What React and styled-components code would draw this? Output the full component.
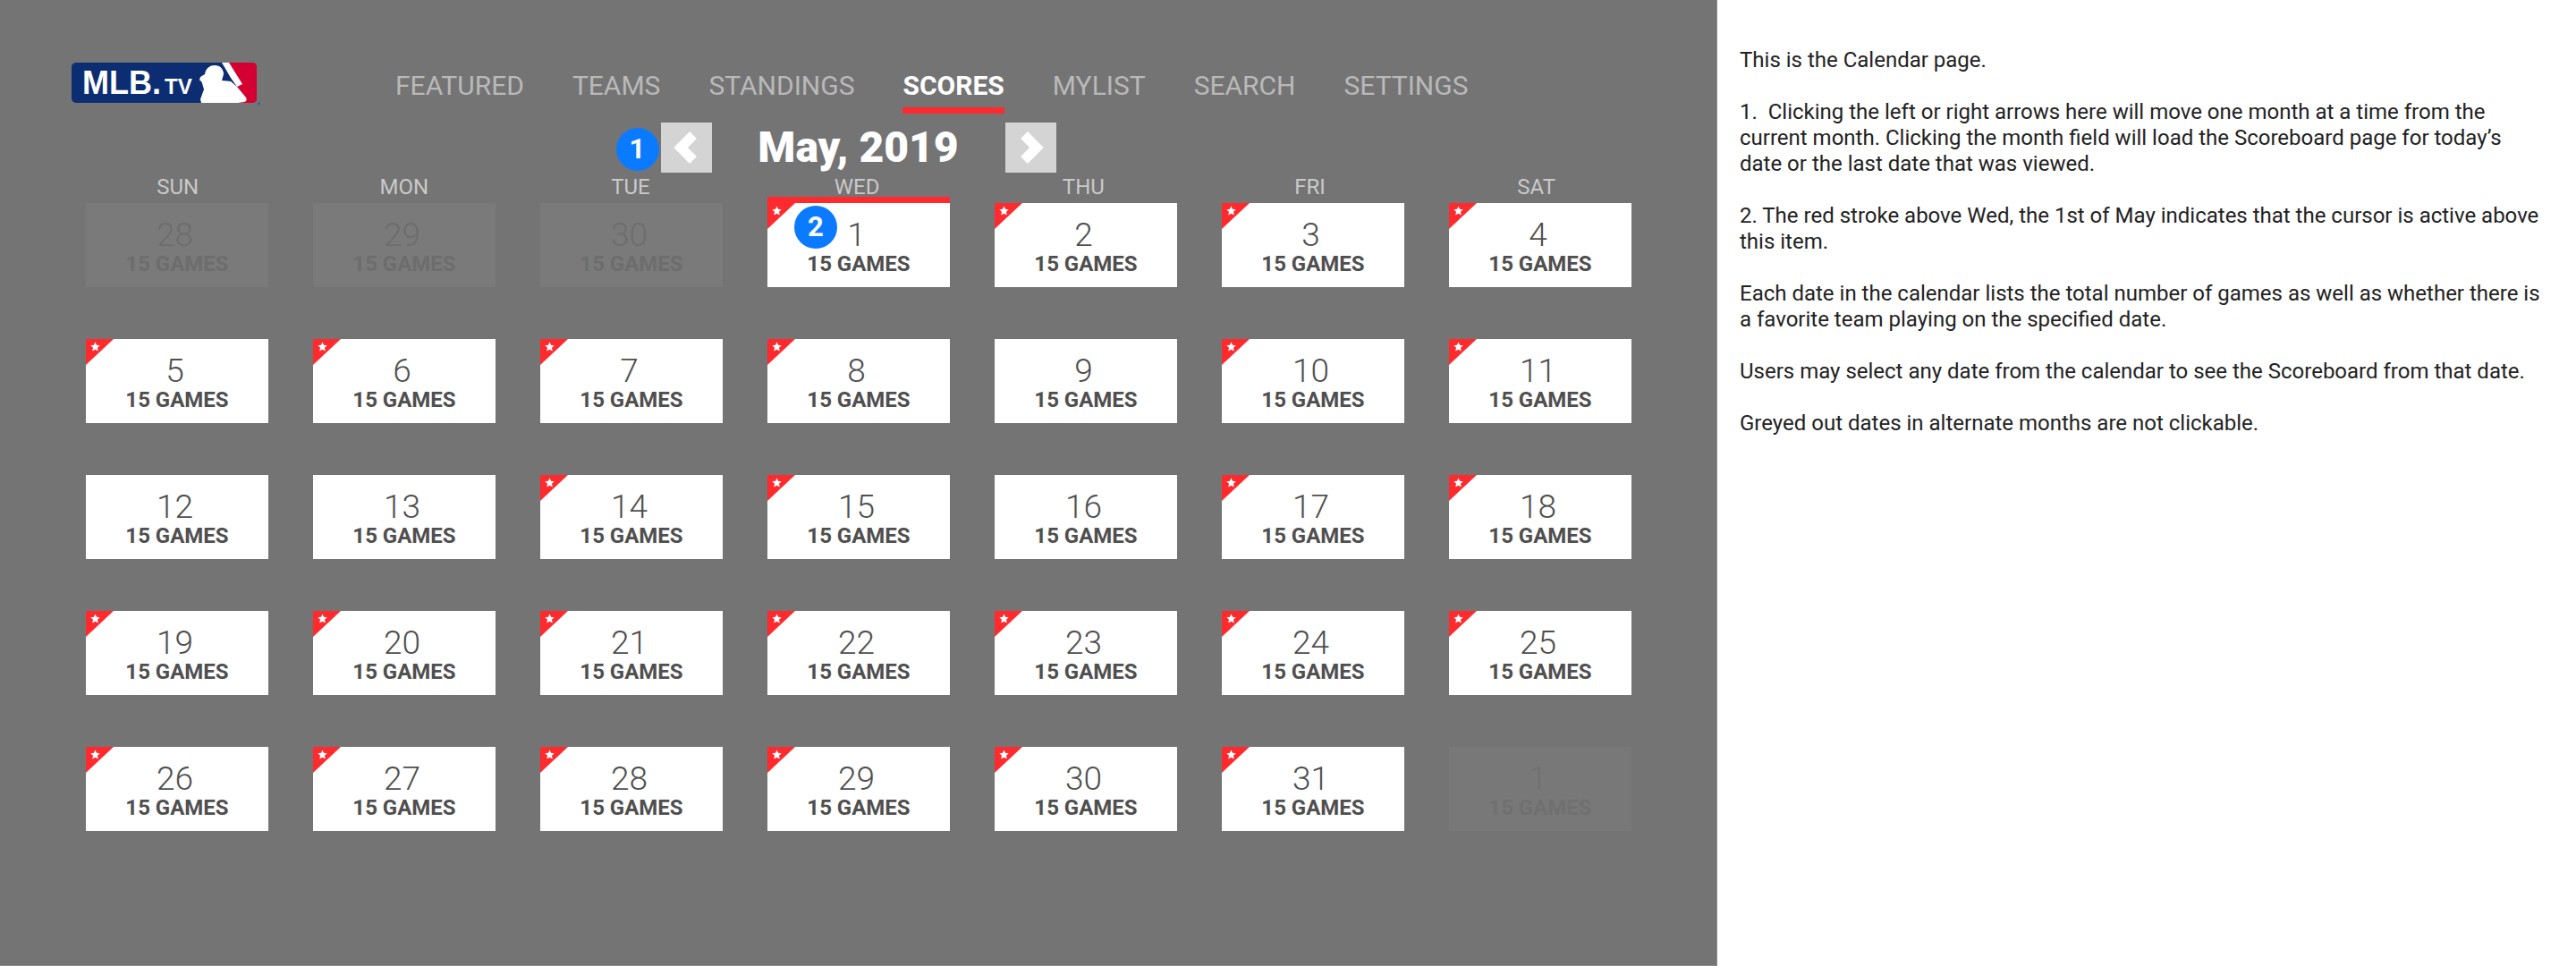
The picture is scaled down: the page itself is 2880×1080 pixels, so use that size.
import React from 'react';
import styled, { createGlobalStyle } from 'styled-components';

const NAV = ['FEATURED', 'TEAMS', 'STANDINGS', 'SCORES', 'MYLIST', 'SEARCH', 'SETTINGS'];
const WEEKDAYS = ['SUN', 'MON', 'TUE', 'WED', 'THU', 'FRI', 'SAT'];
const NO_FAVORITE = [9, 12, 13, 16];

const days = [
  { day: 28, muted: true },
  { day: 29, muted: true },
  { day: 30, muted: true },
  ...Array.from({ length: 31 }, (_, i) => ({ day: i + 1, favorite: !NO_FAVORITE.includes(i + 1) })),
  { day: 1, muted: true, faded: true },
];

const Logo = () => (
  <LogoSvg viewBox="0 0 212 48" width="212" height="48">
    <rect width="207" height="45" rx="5" fill="#0c2d72" />
    <path d="M176 0h26a5 5 0 0 1 5 5v35a5 5 0 0 1-5 5h-15l-1-8 4-3-14-20z" fill="#d50032" />
    <path d="M168 0h8l15 24-6 3-7-10z" fill="#fff" />
    <path d="M144 16l5-3c1-7 6-10 11-10 6 0 10 4 10 10l-2 7 10 1 7 6 10 12c1 2 1 4-2 5l-7 1v0h-41l-1-4 4-11-2-7c-1-2-1-3-3-3z" fill="#fff" />
    <LogoMark x="12" y="35" fontSize="36">
      MLB.
      <tspan dx="4" fontSize="24">TV</tspan>
    </LogoMark>
    <circle cx="209.5" cy="46" r="1.3" fill="#2f5597" />
  </LogoSvg>
);

const Star = () => (
  <StarSvg viewBox="0 0 24 24" width="11" height="11">
    <path d="M12 1l3.4 7.3 7.9 1-5.8 5.5 1.5 7.9L12 18.9l-7 3.8 1.5-7.9L.7 9.3l7.9-1z" fill="#fff" />
  </StarSvg>
);

const Chevron = ({ dir }) => (
  <svg viewBox="0 0 57 56" width="57" height="56">
    <polyline
      points={dir === 'left' ? '36,14 22,28 36,42' : '21,14 35,28 21,42'}
      fill="none"
      stroke="#fff"
      strokeWidth="11"
      strokeLinejoin="miter"
    />
  </svg>
);

export default function App() {
  return (
    <Page>
      <GlobalStyle />
      <Screen>
        <Header>
          <Logo />
          <Nav>
            {NAV.map((item) => (
              <NavItem key={item} $active={item === 'SCORES'}>{item}</NavItem>
            ))}
          </Nav>
        </Header>
        <MonthRow>
          <ArrowButton>
            <Badge $left={-50} $top={6}>1</Badge>
            <Chevron dir="left" />
          </ArrowButton>
          <MonthTitle>May, 2019</MonthTitle>
          <ArrowButton>
            <Chevron dir="right" />
          </ArrowButton>
        </MonthRow>
        <WeekRow>
          {WEEKDAYS.map((d) => (
            <WeekDay key={d}>{d}</WeekDay>
          ))}
        </WeekRow>
        <CalendarGrid>
          {days.map((d, i) => (
            <DayCard key={i} $muted={d.muted} $faded={d.faded} $active={i === 3}>
              {d.favorite && (
                <Corner>
                  <Star />
                </Corner>
              )}
              {i === 3 && <Badge $left={30} $top={3}>2</Badge>}
              <DayNumber>{d.day}</DayNumber>
              <GameCount>15 GAMES</GameCount>
            </DayCard>
          ))}
        </CalendarGrid>
      </Screen>
      <Notes>
        <p>This is the Calendar page.</p>
        <p>1.&nbsp; Clicking the left or right arrows here will move one month at a time from the current month. Clicking the month field will load the Scoreboard page for today’s date or the last date that was viewed.</p>
        <p>2. The red stroke above Wed, the 1st of May indicates that the cursor is active above this item.</p>
        <p>Each date in the calendar lists the total number of games as well as whether there is a favorite team playing on the specified date.</p>
        <p>Users may select any date from the calendar to see the Scoreboard from that date.</p>
        <p>Greyed out dates in alternate months are not clickable.</p>
      </Notes>
    </Page>
  );
}

const GlobalStyle = createGlobalStyle`
  html, body {
    margin: 0;
    padding: 0;
    background: #fff;
  }
  body {
    font-family: 'Roboto', 'Liberation Sans', sans-serif;
  }
`;

const Page = styled.div`
  display: flex;
  width: 2880px;
  height: 1080px;
  overflow: hidden;
`;

const Screen = styled.main`
  box-sizing: border-box;
  width: 1920px;
  height: 1080px;
  padding-top: 70px;
  background: #747474;
  border-right: 1px solid #8c8c8c;
  border-bottom: 1px solid #8c8c8c;
`;

const Header = styled.header`
  display: flex;
  align-items: flex-start;
  padding-left: 80px;
  height: 57px;
`;

const LogoSvg = styled.svg`
  flex: none;
  margin-right: 150px;
`;

const LogoMark = styled.text`
  font-family: 'Liberation Sans', Arial, sans-serif;
  font-weight: 700;
  fill: #fff;
`;

const Nav = styled.nav`
  display: flex;
  gap: 54px;
`;

const NavItem = styled.div`
  height: 50px;
  line-height: 52px;
  font-size: 30px;
  font-weight: ${(p) => (p.$active ? 700 : 400)};
  color: ${(p) => (p.$active ? '#fff' : '#b9b9b9')};
  border-bottom: 7px solid ${(p) => (p.$active ? '#ff2a2e' : 'transparent')};
`;

const MonthRow = styled.div`
  display: flex;
  justify-content: center;
  margin-top: 10px;
  height: 56px;
`;

const ArrowButton = styled.div`
  position: relative;
  width: 57px;
  height: 56px;
  background: #d4d4d4;
`;

const MonthTitle = styled.h1`
  width: 328px;
  margin: 0;
  text-align: center;
  font-size: 48px;
  line-height: 56px;
  font-weight: 900;
  color: #fff;
`;

const WeekRow = styled.div`
  display: grid;
  grid-template-columns: repeat(7, 253.2px);
  margin-left: 72px;
  height: 34px;
  padding-top: 2px;
  box-sizing: border-box;
`;

const WeekDay = styled.div`
  text-align: center;
  font-size: 24px;
  line-height: 28px;
  color: #c9c9c9;
`;

const CalendarGrid = styled.div`
  display: grid;
  grid-template-columns: repeat(7, 204px);
  grid-auto-rows: 94px;
  column-gap: 50px;
  row-gap: 58px;
  padding-left: 96px;
`;

const DayCard = styled.div`
  position: relative;
  display: flex;
  flex-direction: column;
  align-items: center;
  padding-top: 17px;
  background: ${(p) => (p.$faded ? '#787878' : p.$muted ? '#7a7a7a' : '#fff')};
  color: ${(p) => (p.$faded ? '#707070' : p.$muted ? '#6d6d6d' : '#4f4f4f')};
  box-sizing: border-box;
  ${(p) => p.$active && `
    &::before {
      content: '';
      position: absolute;
      left: 0;
      right: 0;
      top: -7px;
      height: 7px;
      background: #ff2a2e;
    }
  `}
`;

const Corner = styled.div`
  position: absolute;
  left: 0;
  top: 0;
  width: 31px;
  height: 29px;
  background: #ff2a2e;
  clip-path: polygon(0 0, 100% 0, 0 100%);
`;

const StarSvg = styled.svg`
  position: absolute;
  left: 5px;
  top: 3px;
`;

const DayNumber = styled.div`
  font-size: 37px;
  line-height: 38px;
  font-weight: 300;
  margin-right: 5px;
`;

const GameCount = styled.div`
  font-size: 24px;
  line-height: 26px;
  font-weight: 700;
`;

const Badge = styled.div`
  position: absolute;
  left: ${(p) => p.$left}px;
  top: ${(p) => p.$top}px;
  z-index: 2;
  width: 48px;
  height: 48px;
  border-radius: 50%;
  background: #0a7bff;
  color: #fff;
  font-size: 31px;
  font-weight: 700;
  line-height: 48px;
  text-align: center;
`;

const Notes = styled.aside`
  box-sizing: border-box;
  width: 960px;
  padding: 53px 40px 0 25px;
  font-size: 24px;
  line-height: 29px;
  color: #222;

  p {
    margin: 0 0 29px;
  }
`;
